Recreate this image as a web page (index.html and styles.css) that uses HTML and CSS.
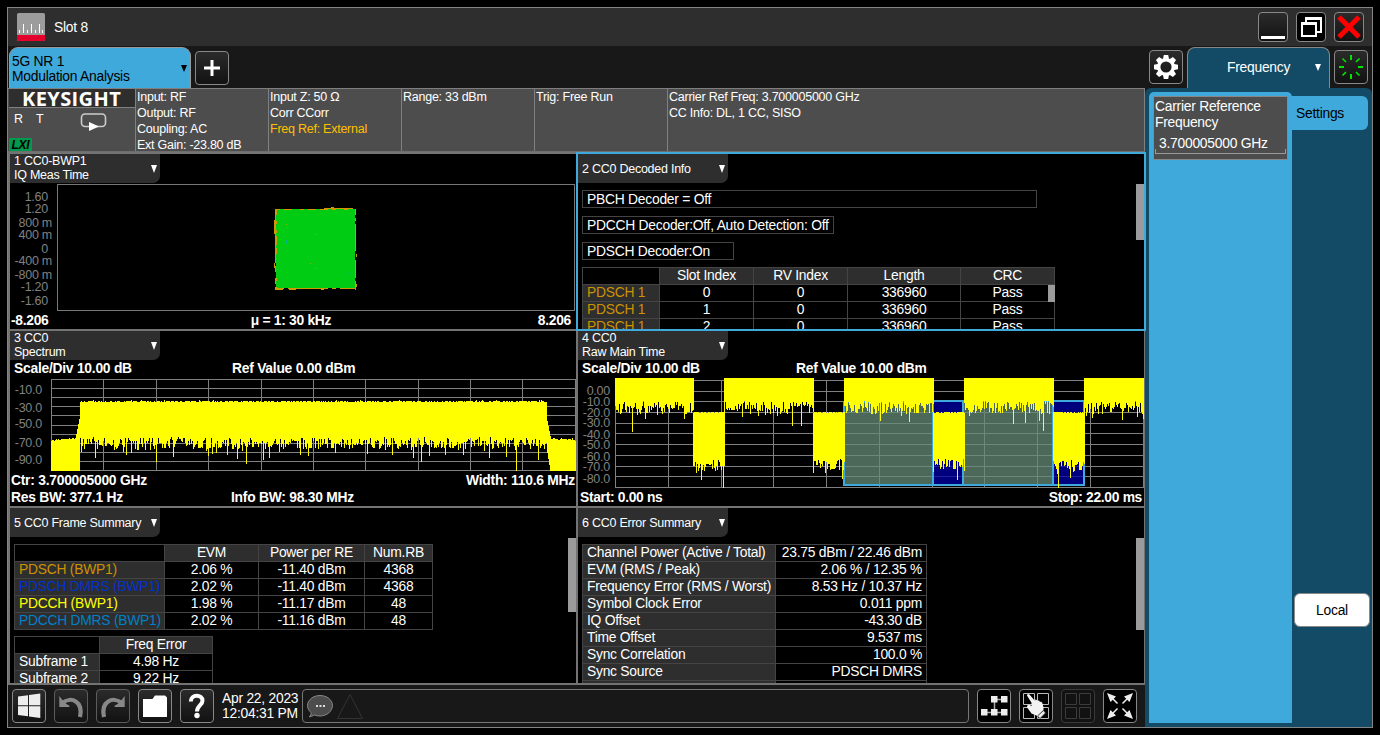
FILE: index.html
```html
<!DOCTYPE html>
<html lang="en">
<head>
<meta charset="utf-8">
<title>Slot 8</title>
<link rel="stylesheet" href="styles.css">
</head>
<body>
<div class="window">
  <header class="titlebar">
    <svg class="app-icon" width="28" height="28" viewBox="0 0 28 28"><rect width="28" height="28" rx="1.5" fill="#9c9c9c"/><path d="M0 22h28v4.500a1.500 1.500 0 0 1-1.500 1.500h-25a1.500 1.500 0 0 1-1.500-1.500z" fill="#e4002b"/><path d="M2.500 17v3M6.500 11v9M10.500 17v3M14.500 11v9M18.500 17v3M22.500 11v9M25.500 17v3" stroke="#fff"/></svg>
    <span class="title">Slot 8</span>
    <div class="win-buttons">
      <button class="btn small"><svg width="28" height="28"><path d="M2 23h24v3H2z" fill="#fff"/></svg></button>
      <button class="btn small dark"><svg width="28" height="28" fill="none" stroke="#fff" stroke-width="2"><path d="M9 9V5h15v14h-5"/><path d="M9 5.500h15" stroke-width="3"/><path d="M5 10h14v13H5z" fill="#000"/><path d="M4 10.500h16" stroke-width="3"/></svg></button>
      <button class="btn small"><svg width="28" height="28"><path d="M4 4l20 20M24 4L4 24" stroke="#f00" stroke-width="5"/></svg></button>
    </div>
  </header>

  <nav class="tabrow">
    <div class="mode-tab"><span>5G NR 1<br>Modulation Analysis</span><svg class="arrow" width="6" height="7"><path d="M0 0h6L3 7z"/></svg></div>
    <button class="btn add"><svg width="32" height="32"><path d="M16 8v16M8 16h16" stroke="#fff" stroke-width="3"/></svg></button>
    <div class="tabrow-right">
      <button class="btn"><svg width="32" height="32"><g fill="#fff" transform="translate(16 16)"><path d="M-2.200-12h4.400l1 5h-6.400zM-2.200 12h4.400l1-5h-6.400z"/><path d="M-2.200-12h4.400l1 5h-6.400zM-2.200 12h4.400l1-5h-6.400z" transform="rotate(45)"/><path d="M-2.200-12h4.400l1 5h-6.400zM-2.200 12h4.400l1-5h-6.400z" transform="rotate(90)"/><path d="M-2.200-12h4.400l1 5h-6.400zM-2.200 12h4.400l1-5h-6.400z" transform="rotate(135)"/><circle r="7.300" fill="none" stroke="#fff" stroke-width="3.400"/></g></svg></button>
      <div class="menu-tab"><span>Frequency</span><svg class="arrow" width="6" height="7"><path d="M0 0h6L3 7z"/></svg></div>
      <button class="btn"><svg width="32" height="32"><g transform="translate(16 16)" stroke="#00e400" stroke-width="2"><path d="M0-12v5M0 12V7M-12 0h5M12 0H7"/><path d="M-8.500-8.500l3.500 3.500M8.500 8.500L5 5M-8.500 8.500L-5 5M8.500-8.500L5-5" stroke-width="1.600"/></g></svg></button>
    </div>
  </nav>

  <div class="content">
    <main class="main">
      <section class="status">
        <div class="brand">
          <div class="brand-name">KEYSIGHT</div>
          <div class="brand-flags"><span>R</span><span>T</span>
            <svg width="27" height="19"><rect x="1.500" y="1" width="24" height="12.500" rx="3.500" fill="none" stroke="#ccc" stroke-width="1.600"/><path d="M9 9l10 4.500-10 4.500z" fill="#fff"/></svg>
          </div>
          <div class="lxi">LXI</div>
        </div>
        <div class="cell">Input: RF<br>Output: RF<br>Coupling: AC<br>Ext Gain: -23.80 dB</div>
        <div class="cell">Input Z: 50 Ω<br>Corr CCorr<br><span class="amber">Freq Ref: External</span></div>
        <div class="cell">Range: 33 dBm</div>
        <div class="cell">Trig: Free Run</div>
        <div class="cell">Carrier Ref Freq: 3.700005000 GHz<br>CC Info: DL, 1 CC, SISO</div>
      </section>

      <section class="panels">
        <article class="panel">
          <div class="ptab"><span>1 CC0-BWP1<br>IQ Meas Time</span><svg class="arrow" width="6" height="8"><path d="M0 0h6L3 8z"/></svg></div>
          <svg class="plot" width="566" height="129" viewBox="10 183 566 129">
            <rect x="57.500" y="184.500" width="517" height="126" fill="none" stroke="#787878"/>
            <g class="axis"><text x="48" y="201">1.60</text><text x="48" y="213">1.20</text><text x="52" y="227">800 m</text><text x="52" y="239">400 m</text><text x="48" y="253">0</text><text x="52" y="265">-400 m</text><text x="52" y="279">-800 m</text><text x="48" y="291">-1.20</text><text x="48" y="305">-1.60</text></g>
            <g id="iq" shape-rendering="crispEdges"></g>
          </svg>
          <div class="foot three"><span>-8.206</span><span>μ = 1: 30 kHz</span><span>8.206</span></div>
        </article>

        <article class="panel">
          <div class="ptab"><span class="one">2 CC0 Decoded Info</span><svg class="arrow" width="6" height="8"><path d="M0 0h6L3 8z"/></svg></div>
          <div class="decoders">
            <div class="dbox wide">PBCH Decoder = Off</div>
            <div class="dbox mid">PDCCH Decoder:Off, Auto Detection: Off</div>
            <div class="dbox narrow">PDSCH Decoder:On</div>
          </div>
          <div class="table decoded">
            <b></b><b>Slot Index</b><b>RV Index</b><b>Length</b><b>CRC</b>
            <b class="key amberd">PDSCH 1</b><i>0</i><i>0</i><i>336960</i><i>Pass</i>
            <b class="key amberd">PDSCH 1</b><i>1</i><i>0</i><i>336960</i><i>Pass</i>
            <b class="key amberd">PDSCH 1</b><i>2</i><i>0</i><i>336960</i><i>Pass</i>
            <span class="mini-thumb"></span>
          </div>
          <span class="thumb t-decoded"></span>
        </article>

        <article class="panel">
          <div class="ptab"><span>3 CC0<br>Spectrum</span><svg class="arrow" width="6" height="8"><path d="M0 0h6L3 8z"/></svg></div>
          <div class="phead"><span class="a">Scale/Div 10.00 dB</span><span>Ref Value 0.00 dBm</span></div>
          <svg class="plot" width="566" height="95" viewBox="10 377 566 95">
            <g id="grid3" stroke="#808080" shape-rendering="crispEdges"></g>
            <g class="axis"><text x="42" y="394">-10.0</text><text x="42" y="412">-30.0</text><text x="42" y="428">-50.0</text><text x="42" y="447">-70.0</text><text x="42" y="464">-90.0</text></g>
            <path id="trace3" fill="#ff0" shape-rendering="crispEdges"/>
          </svg>
          <div class="foot low"><span>Ctr: 3.700005000 GHz</span><span>Width: 110.6 MHz</span></div>
          <div class="foot last"><span class="res">Res BW: 377.1 Hz</span><span>Info BW: 98.30 MHz</span></div>
        </article>

        <article class="panel">
          <div class="ptab"><span>4 CC0<br>Raw Main Time</span><svg class="arrow" width="6" height="8"><path d="M0 0h6L3 8z"/></svg></div>
          <div class="phead"><span class="b">Scale/Div 10.00 dB</span><span>Ref Value 10.00 dBm</span></div>
          <svg class="plot" width="566" height="112" viewBox="578 377 566 112">
            <g id="grid4" stroke="#808080" shape-rendering="crispEdges"></g>
            <g shape-rendering="crispEdges" fill-opacity=".75">
              <rect x="843" y="401" width="90" height="85" fill="#668b77"/><rect x="964" y="401" width="89" height="85" fill="#668b77"/>
              <rect x="933" y="401" width="31" height="85" fill="#0000aa"/><rect x="1053" y="401" width="31" height="85" fill="#0000aa"/>
            </g>
            <g fill="none" stroke="#3fa9db" stroke-width="2" shape-rendering="crispEdges"><path d="M844 402v83h89v-83zM933 401h30v84h-30zM963 401h90v84h-90zM1053 401h31v84h-31z"/></g>
            <g class="axis"><text x="610" y="395">0.00</text><text x="610" y="406">-10.0</text><text x="610" y="417">-20.0</text><text x="610" y="427">-30.0</text><text x="610" y="439">-40.0</text><text x="610" y="449">-50.0</text><text x="610" y="461">-60.0</text><text x="610" y="471">-70.0</text><text x="610" y="483">-80.0</text></g>
            <path id="trace4" fill="#ff0" shape-rendering="crispEdges"/>
          </svg>
          <div class="foot time"><span>Start: 0.00 ns</span><span>Stop: 22.00 ms</span></div>
        </article>

        <article class="panel">
          <div class="ptab"><span class="one">5 CC0 Frame Summary</span><svg class="arrow" width="6" height="8"><path d="M0 0h6L3 8z"/></svg></div>
          <div class="table frame">
            <b></b><b>EVM</b><b>Power per RE</b><b>Num.RB</b>
            <b class="key amberd">PDSCH (BWP1)</b><i>2.06 %</i><i>-11.40 dBm</i><i>4368</i>
            <b class="key blue">PDSCH DMRS (BWP1)</b><i>2.02 %</i><i>-11.40 dBm</i><i>4368</i>
            <b class="key yellow">PDCCH (BWP1)</b><i>1.98 %</i><i>-11.17 dBm</i><i>48</i>
            <b class="key sky">PDCCH DMRS (BWP1)</b><i>2.02 %</i><i>-11.16 dBm</i><i>48</i>
          </div>
          <div class="table subframe">
            <b></b><b>Freq Error</b>
            <b class="key">Subframe 1</b><i>4.98 Hz</i>
            <b class="key">Subframe 2</b><i>9.22 Hz</i>
          </div>
          <span class="thumb t-frame"></span>
        </article>

        <article class="panel">
          <div class="ptab"><span class="one">6 CC0 Error Summary</span><svg class="arrow" width="6" height="8"><path d="M0 0h6L3 8z"/></svg></div>
          <div class="table errors">
            <b class="key">Channel Power (Active / Total)</b><i>23.75 dBm / 22.46 dBm</i>
            <b class="key">EVM (RMS / Peak)</b><i>2.06 % / 12.35 %</i>
            <b class="key">Frequency Error (RMS / Worst)</b><i>8.53 Hz / 10.37 Hz</i>
            <b class="key">Symbol Clock Error</b><i>0.011 ppm</i>
            <b class="key">IQ Offset</b><i>-43.30 dB</i>
            <b class="key">Time Offset</b><i>9.537 ms</i>
            <b class="key">Sync Correlation</b><i>100.0 %</i>
            <b class="key">Sync Source</b><i>PDSCH DMRS</i>
            <b class="key"></b><i></i>
          </div>
          <span class="thumb t-errors"></span>
        </article>
        <div class="focus"></div>
      </section>

      <footer class="toolbar">
        <button class="btn"><svg width="32" height="32" fill="#eee"><path d="M5 6.500L15 5.200v10H5zM16 5L27.300 3.500v11.700H16zM5 16.300h10v10L5 25zM16 16.300h11.300V28L16 26.500z"/></svg></button>
        <button class="btn faded"><svg width="32" height="32"><path d="M8 12.500C16 6.500 28.500 11 25 27" fill="none" stroke="#888" stroke-width="4.200"/><path d="M4.300 6l3.500 4.500 3.500 3.500 3 1.500v1.500h-10z" fill="#888"/></svg></button>
        <button class="btn faded"><svg width="32" height="32"><path d="M24 12.500C16 6.500 3.500 11 7 27" fill="none" stroke="#888" stroke-width="4.200"/><path d="M27.700 6l-3.500 4.500-3.500 3.500-3 1.500v1.500h10z" fill="#888"/></svg></button>
        <button class="btn"><svg width="32" height="32"><path d="M4 9h9.500l2.500-3.500h10l2 2V27H4z" fill="#fff"/></svg></button>
        <button class="btn"><svg width="32" height="32"><path d="M9.800 11.500C9.800 4 21.500 4 21.500 10.700 21.500 15 16 15.500 16 21.500" fill="none" stroke="#fff" stroke-width="4"/><circle cx="16" cy="25.500" r="2.700" fill="#fff"/></svg></button>
        <div class="clock">Apr 22, 2023<br>12:04:31 PM</div>
        <div class="messages">
          <svg width="62" height="32"><path d="M17 5.500c7 0 12.500 4.500 12.500 10S24 26 17 26c-2 0-4-.3-5.500-1L6.500 27l2-4C6 21 4.500 18.500 4.500 15.500 4.500 10 10 5.500 17 5.500z" fill="#4d4d4d" stroke="#888"/><path d="M13 15h2v2h-2zM16.500 15h2v2h-2zM20 15h2v2h-2z" fill="#ddd"/><path d="M47 4.500L59.500 28.500h-25z" fill="none" stroke="#333"/></svg>
        </div>
        <button class="btn black"><svg width="32" height="32"><path d="M16 9.500h11M16.500 9v13M6 22.500h21" stroke="#aaa" stroke-width="1.500"/><path d="M13 6h6.500v6.500H13zM23 6h6.500v6.500H23zM3 19h6.500v6.500H3zM13 19h6.500v6.500H13zM23 19h6.500v6.500H23z" fill="#eee"/></svg></button>
        <button class="btn black"><svg width="32" height="32"><path d="M3.500 3.500h11v11h-11zM17.500 3.500h11v11h-11zM3.500 17.500h11v11h-11zM17.500 17.500h11v11h-11z" fill="none" stroke="#bbb"/><path d="M7 5.500c0-1.500 1.500-2 2.500-1l5.500 6.500c0-2 1.500-2 2.500 0 1-1 2-.5 2.500 1 1-.5 2 0 2.500 1.500l1 4v2.500L17.500 26l-6-2.500L7.500 18c-1.500-2.500 1-4 2.500-3l1.500 1.300v-3.500z" fill="#f2f2f2"/><path d="M17.500 26l6-5.500 2 2.500-5.500 5.500z" fill="#eee" stroke="#333" stroke-width=".8"/></svg></button>
        <button class="btn dim"><svg width="32" height="32"><path d="M3.500 3.500h11v11h-11zM17.500 3.500h11v11h-11zM3.500 17.500h11v11h-11zM17.500 17.500h11v11h-11z" fill="none" stroke="#3c3c3c"/></svg></button>
        <button class="btn black"><svg width="32" height="32"><path d="M7 7l6.500 6.500M25 7l-6.500 6.500M7 25l6.500-6.500M25 25l-6.500-6.500" stroke="#eee" stroke-width="1.500"/><path d="M3 3l9 3.500L6.500 12zM29 3l-9 3.500 5.500 5.500zM3 29l9-3.500L6.500 20zM29 29l-9-3.500 5.500-5.500z" fill="#eee"/></svg></button>
      </footer>
    </main>

    <aside class="side">
      <div class="side-menu">
        <div class="field"><div class="field-label">Carrier Reference Frequency</div><div class="field-value">3.700005000 GHz</div><div class="field-line"></div></div>
      </div>
      <div class="side-tabs"><div class="side-tab">Settings</div><button class="local">Local</button></div>
    </aside>
  </div>
</div>
<script src="plots.js"></script>
</body>
</html>
```

FILE: styles.css
```css
* { box-sizing: border-box; }
body { margin: 0; padding: 7px; background: #000; color: #fff; font: 13.85px/15px "Liberation Sans", Arial, sans-serif; letter-spacing: -.25px; overflow: hidden; }
svg { display: block; flex: none; }
button { font: inherit; letter-spacing: inherit; padding: 0; margin: 0; }

.window { width: 1366px; height: 721px; border: 1px solid #858585; background: #181818; }
.titlebar { height: 38px; background: #2e2e2e; display: flex; align-items: center; padding: 0 8px 0 9px; }
.title { margin-left: 9px; flex: 1; }
.win-buttons { display: flex; gap: 8px; }
.btn { width: 34px; height: 34px; flex: none; border: 1px solid #888; border-radius: 4px; background: linear-gradient(#2b2b2b, #121212); overflow: hidden; }
.btn.small { width: 30px; height: 30px; }
.btn.dark, .btn.black { background: #000; }
.btn.faded { border-color: #5c5c5c; }
.btn.dim { border-color: #3a3a3a; background: #121212; }

.tabrow { height: 42px; display: flex; padding: 1px 4px 0 1px; }
.mode-tab { width: 182px; height: 41px; background: #3fa9db; color: #000; border: 1px solid #999; border-bottom: 0; border-radius: 9px 9px 0 0; display: flex; align-items: center; justify-content: space-between; padding: 2px 3px 1px 2px; }
.arrow { fill: currentColor; }
.add { margin: 4px 0 0 4px; }
.tabrow-right { margin-left: auto; display: flex; gap: 4px; }
.tabrow-right .btn { margin-top: 3px; }
.menu-tab { width: 143px; height: 41px; background: #134b66; border: 1px solid #888; border-bottom: 0; border-radius: 8px 8px 0 0; display: flex; align-items: center; justify-content: space-between; padding: 0 8px 1px 39px; }

.content { display: flex; height: 639px; }
.main { width: 1137px; height: 639px; display: flex; flex-direction: column; }
.status { height: 64px; background: #4d4d4d; border-top: 1px solid #7f7f7f; border-bottom: 1px solid #6e6e6e; display: flex; font-size: 12.5px; line-height: 16px; }
.cell { width: 133px; border-left: 1px solid #808080; padding-left: 1px; white-space: nowrap; }
.cell:last-child { flex: 1; border-right: 1px solid #808080; }
.brand { width: 127px; padding-left: 1px; display: flex; flex-direction: column; }
.brand-name { height: 19px; background: #2e2e2e; border-bottom: 1px solid #808080; font: bold 20px/19px "Open Sans", sans-serif; padding-left: 13px; letter-spacing: .4px; }
.brand-flags { height: 30px; display: flex; padding: 3px 0 0 5px; line-height: 17px; }
.brand-flags span { width: 22px; }
.brand-flags svg { margin: 2px 0 0 22px; }
.lxi { width: 23px; height: 13px; background: #00994d; color: #000; font: italic bold 12px/14px "Liberation Sans", sans-serif; text-align: center; }
.amber { color: #ffc000; }

.panels { position: relative; height: 533px; padding: 2px 1px 2px 2px; background: #737373; display: grid; grid-template-columns: 566px 566px; grid-template-rows: repeat(3, 175px); gap: 2px; }
.panel { position: relative; background: #000; overflow: hidden; }
.focus { position: absolute; left: 568px; top: 0; width: 570px; height: 179px; border: 2px solid #3fa9db; }
.ptab { width: 150px; height: 29px; background: #2e2e2e; border-radius: 0 0 7px 0; display: flex; align-items: center; justify-content: space-between; padding: 0 3px 0 4px; font-size: 12.5px; line-height: 14px; white-space: nowrap; }
.ptab span { margin-top: -1px; }
.ptab .one { margin-top: 1px; }
.ptab .arrow { margin-top: 1px; }
.plot { font: 12.5px "Liberation Sans", sans-serif; letter-spacing: -.25px; }
.axis { fill: #808080; text-anchor: end; }
.foot { display: flex; justify-content: space-between; font-weight: bold; padding: 0 1px 0 1px; }
.foot.three { display: grid; grid-template-columns: 1fr 1fr 1fr; padding: 1px 5px 0 1px; letter-spacing: -.3px; }
.three span:nth-child(2) { text-align: center; }
.three span:nth-child(3) { text-align: right; }
.phead { height: 17px; display: flex; font-weight: bold; padding: 1px 4px; }
.phead .a { width: 218px; }
.phead .b { width: 214px; }
.low { padding-top: 1px; }
.last { justify-content: flex-start; padding-top: 2px; }
.last .res { width: 220px; }
.foot.time { padding: 1px 2px; letter-spacing: -.32px; }

.decoders { display: flex; flex-direction: column; gap: 8px; padding: 7px 4px; height: 84px; align-items: flex-start; }
.dbox { height: 18px; flex: none; border: 1px solid #444; padding-left: 4px; line-height: 16px; white-space: nowrap; }
.wide { width: 455px; }
.mid { width: 252px; }
.narrow { width: 152px; }

.table { position: relative; display: grid; width: max-content; grid-auto-rows: 17px; border-right: 1px solid #444; border-bottom: 1px solid #444; margin-left: 4px; }
.table b, .table i { font: inherit; line-height: 15px; border-left: 1px solid #444; border-top: 1px solid #444; text-align: center; white-space: nowrap; }
.table b { background: #2e2e2e; }
.table b:first-child:empty { background: #000; }
.table .key { text-align: left; padding-left: 4px; }
.decoded { grid-template-columns: 77px 94px 94px 113px 94px; }
.frame { grid-template-columns: 150px 94px 106px 68px; margin-top: 7px; }
.subframe { grid-template-columns: 85px 113px; margin-top: 6px; }
.errors { grid-template-columns: 193px 151px; margin-top: 7px; }
.errors i { text-align: right; padding-right: 4px; }
.table .amberd { color: #cc9200; }
.table .blue { color: #0033cc; }
.table .yellow { color: #ff0; }
.table .sky { color: #0080c8; }
.thumb, .mini-thumb { position: absolute; background: #9b9b9b; }
.thumb { right: 0; width: 8px; }
.t-decoded { top: 30px; height: 56px; }
.t-frame { top: 30px; height: 74px; }
.t-errors { top: 30px; height: 92px; }
.mini-thumb { right: -1px; top: 18px; width: 7px; height: 17px; }

.toolbar { height: 42px; background: #181818; display: flex; gap: 8px; padding: 4px 8px 0 4px; }
.clock { width: 80px; padding-top: 2px; white-space: nowrap; }
.messages { width: 667px; height: 34px; margin-left: -8px; border: 1px solid #777; border-radius: 4px; }

.side { width: 227px; height: 639px; background: #134b66; border-radius: 6px 6px 0 0; display: flex; padding: 4px 2px 4px 4px; }
.side-menu { width: 143px; background: #3fa9db; border-radius: 5px 5px 0 0; padding: 4px; }
.field { width: 135px; height: 64px; background: #4d4d4d; border: 1px solid #888; padding: 1px; line-height: 16px; }
.field-value { padding: 5px 0 0 4px; }
.field-line { width: 131px; height: 5px; margin-top: -2px; border: 1px solid #999; border-top: 0; }
.side-tabs { width: 78px; padding: 4px 0 96px; display: flex; flex-direction: column; justify-content: space-between; }
.side-tab { width: 76px; height: 34px; background: #3fa9db; color: #000; border-radius: 0 6px 6px 0; line-height: 34px; padding-left: 4px; }
.local { width: 76px; height: 34px; margin-left: 2px; background: #fff; border: 1px solid #888; border-radius: 6px; color: #000; }
```

FILE: plots.js
```js
// Small deterministic generator so traces are the same on every load.
function generator(seed) {
  return function () {
    seed = (seed * 1664525 + 1013904223) >>> 0;
    return seed / 4294967296;
  };
}

function column(x, top, bottom) {
  return 'M' + x + ' ' + Math.round(top) + 'h1V' + Math.round(bottom) + 'h-1z';
}

function grid(id, xs, ys) {
  var d = '';
  var x0 = xs[0], x1 = xs[xs.length - 1], y0 = ys[0], y1 = ys[ys.length - 1];
  xs.forEach(function (x) { d += 'M' + (x + 0.5) + ' ' + y0 + 'V' + (y1 + 1); });
  ys.forEach(function (y) { d += 'M' + x0 + ' ' + (y + 0.5) + 'H' + (x1 + 1); });
  document.getElementById(id).innerHTML = '<path d="' + d + '"/>';
}

grid('grid3', [51, 103, 156, 208, 261, 313, 365, 418, 470, 522, 575],
  [379, 388, 397, 406, 415, 425, 434, 443, 452, 461, 470]);
grid('grid4', [615, 668, 721, 773, 826, 879, 932, 984, 1037, 1090, 1143],
  [380, 391, 401, 412, 423, 433, 444, 455, 466, 476, 487]);

// Spectrum: noise ledges on both sides of the occupied band.
(function () {
  var rnd = generator(11), d = '';
  var deep = { 95: 458, 126: 455, 156: 462, 173: 457, 208: 456, 227: 455, 237: 459, 246: 464, 263: 460, 269: 458, 308: 456, 392: 455, 413: 458, 421: 462, 463: 455, 489: 458, 506: 457, 516: 471, 538: 460 };
  for (var x = 51; x < 576; x++) {
    var top, bottom;
    if (x < 76) { top = 441 - (x - 51) * 0.1 - rnd() * 1.5; bottom = 471; }
    else if (x < 80) { top = 434 - (x - 76) * 5; bottom = 471; }
    else if (x < 547) {
      top = 402 - (rnd() > 0.45 ? 1 : 0) - (rnd() > 0.95 ? 1 : 0);
      bottom = 437 + rnd() * 12 + Math.pow(rnd(), 8) * 8;
      if (deep[x]) bottom = deep[x];
    }
    else if (x < 551) { top = 421 + (x - 547) * 5; bottom = 453 + (x - 547) * 6; }
    else { top = 438 + rnd() * 1.8 + (x > 572 ? 1.5 : 0); bottom = 471; }
    d += column(x, top, bottom);
  }
  document.getElementById('trace3').setAttribute('d', d);
})();

// Raw main time: strong bursts separated by low-level bursts.
(function () {
  var rnd = generator(29), d = '';
  var high = [[615, 694], [724, 814], [844, 934], [964, 1054], [1084, 1144]];
  var low = [[693, 725], [813, 845], [933, 965], [1053, 1085]];
  var deep = { 632: 432, 645: 419, 684: 419, 742: 417, 792: 426, 801: 426, 880: 421, 909: 422, 1013: 424, 1025: 423, 1039: 421, 1043: 431, 1092: 418, 1122: 420, 1143: 419 };
  var deepLow = { 701: 480, 723: 488, 842: 479, 957: 480, 1058: 488, 1070: 478 };
  high.forEach(function (r) {
    for (var x = r[0]; x < r[1]; x++) {
      d += column(x, 378, deep[x] || 401 + rnd() * 13 + Math.pow(rnd(), 6) * 4);
    }
  });
  low.forEach(function (r) {
    for (var x = r[0]; x < r[1]; x++) {
      d += column(x, 412 + (rnd() > 0.7 ? 1 : 0), deepLow[x] || 459 + rnd() * 11 + Math.pow(rnd(), 4) * 6);
    }
  });
  document.getElementById('trace4').setAttribute('d', d);
})();

// IQ trajectory: dense green square with a ragged amber outline.
(function () {
  var rnd = generator(5), s = '', i;
  function dot(x, y, w, h, c) { s += '<rect x="' + x + '" y="' + y + '" width="' + w + '" height="' + h + '" fill="' + c + '"/>'; }
  dot(276, 209, 79, 79, '#00cc14');
  for (i = 209; i < 288; i += 3) {
    if (rnd() > 0.15) dot(275, i, rnd() > 0.5 ? 2 : 1, 3, '#cc9900');
    if (rnd() > 0.15) dot(355, i, 1, 3, '#cc9900');
  }
  for (i = 276; i < 354; i += 4) {
    if (rnd() > 0.35) dot(i, 209, 4, 1, '#cc9900');
    if (rnd() > 0.15) dot(i, 288, 4, 1, '#cc9900');
  }
  dot(324, 208, 29, 1, '#cc9900'); dot(331, 207, 3, 1, '#cc9900');
  dot(274, 220, 1, 14, '#cc9900'); dot(274, 263, 1, 5, '#cc9900');
  dot(276, 289, 7, 1, '#cc9900'); dot(289, 289, 7, 1, '#cc9900'); dot(321, 289, 3, 1, '#cc9900');
  dot(356, 254, 1, 3, '#cc9900'); dot(356, 284, 1, 3, '#cc9900');
  dot(286, 224, 1, 1, '#88bb00'); dot(315, 234, 1, 1, '#88bb00');
  dot(310, 263, 1, 1, '#88bb00'); dot(315, 268, 1, 1, '#88bb00');
  dot(286, 240, 1, 4, '#00bb88'); dot(349, 224, 1, 1, '#00bb88'); dot(348, 273, 1, 1, '#00bb88');
  document.getElementById('iq').innerHTML = s;
})();
```
